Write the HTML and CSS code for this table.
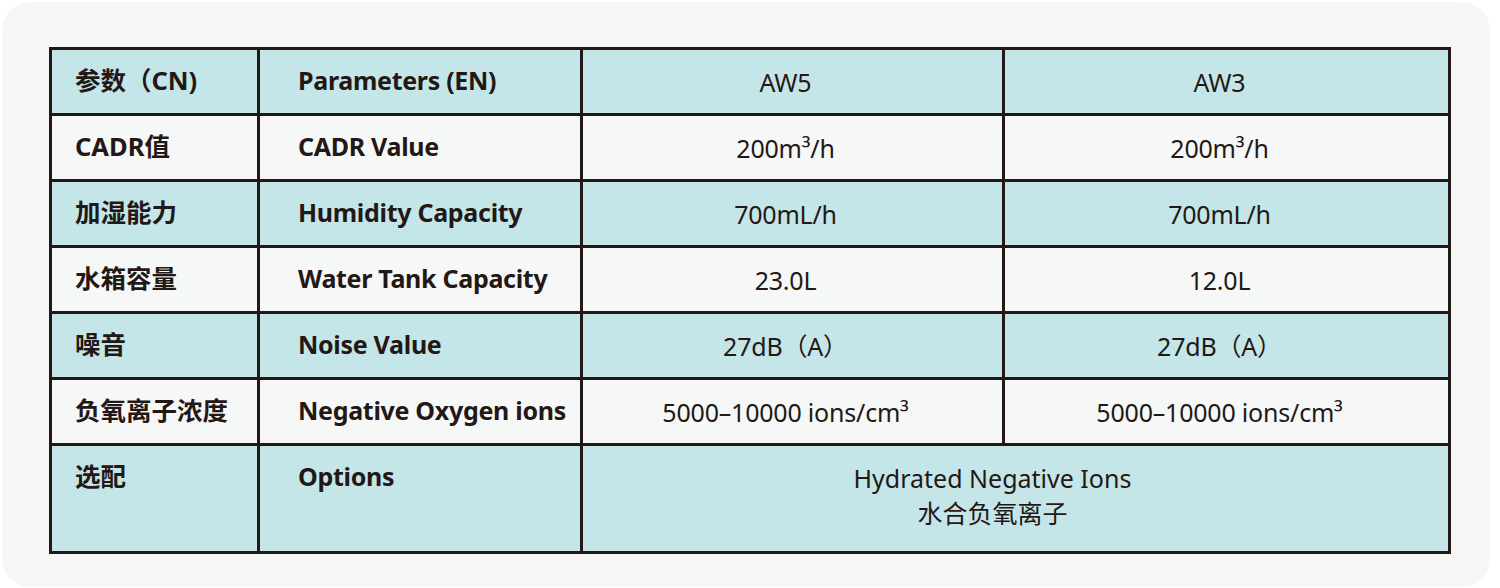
FILE: index.html
```html
<!DOCTYPE html>
<html>
<head>
    <title>AW5 / AW3 Specifications</title>
    <link rel="stylesheet" href="styles.css">
</head>
<body>
    <div class="card">
        <table class="spec">
            <colgroup>
                <col class="col-cn">
                <col class="col-en">
                <col class="col-aw5">
                <col class="col-aw3">
            </colgroup>
            <tr class="teal">
                <td class="cn">参数（CN)</td>
                <td class="en">Parameters (EN)</td>
                <td class="val">AW5</td>
                <td class="val">AW3</td>
            </tr>
            <tr class="plain">
                <td class="cn">CADR值</td>
                <td class="en">CADR Value</td>
                <td class="val">200m³/h</td>
                <td class="val">200m³/h</td>
            </tr>
            <tr class="teal">
                <td class="cn">加湿能力</td>
                <td class="en">Humidity Capacity</td>
                <td class="val">700mL/h</td>
                <td class="val">700mL/h</td>
            </tr>
            <tr class="plain">
                <td class="cn">水箱容量</td>
                <td class="en">Water Tank Capacity</td>
                <td class="val">23.0L</td>
                <td class="val">12.0L</td>
            </tr>
            <tr class="teal">
                <td class="cn">噪音</td>
                <td class="en">Noise Value</td>
                <td class="val">27dB（A）</td>
                <td class="val">27dB（A）</td>
            </tr>
            <tr class="plain">
                <td class="cn">负氧离子浓度</td>
                <td class="en">Negative Oxygen ions</td>
                <td class="val">5000–10000 ions/cm³</td>
                <td class="val">5000–10000 ions/cm³</td>
            </tr>
            <tr class="teal tall">
                <td class="cn">选配</td>
                <td class="en">Options</td>
                <td class="val merged" colspan="2">Hydrated Negative Ions<br>水合负氧离子</td>
            </tr>
        </table>
    </div>
</body>
</html>
```

FILE: styles.css
```css
body {
    margin: 0;
    background-color: #ffffff;
    font-family: "Noto Sans", "Noto Sans CJK SC", sans-serif;
    color: #231815;
}
.card {
    margin: 2px;
    width: 1488px;
    height: 585px;
    box-sizing: border-box;
    padding: 45px 0 0 47px;
    background-color: #f5f6f6;
    border-radius: 28px;
}
.spec {
    table-layout: fixed;
    width: 1402px;
    border-collapse: separate;
    border-spacing: 3px;
    background-color: #231815;
}
.col-cn {
    width: 205px;
}
.col-en {
    width: 320px;
}
.col-aw5 {
    width: 419px;
}
.col-aw3 {
    width: 443px;
}
.spec td {
    box-sizing: border-box;
    height: 63px;
    padding: 0;
    vertical-align: top;
    font-size: 25px;
    line-height: 35px;
    white-space: nowrap;
}
.spec .tall td {
    height: 105px;
}
.teal td {
    background-color: #c4e6e9;
}
.plain td {
    background-color: #f6f7f7;
}
.cn {
    padding: 13px 0 0 23px !important;
    font-weight: 700;
    font-size: 25.5px !important;
}
.en {
    padding: 13px 0 0 38px !important;
    font-weight: 700;
    letter-spacing: -0.3px;
}
.val {
    padding: 15px 14px 0 0 !important;
    text-align: center;
    letter-spacing: -0.2px;
}
.merged {
    padding: 15px 46px 0 0 !important;
    letter-spacing: 0;
}
```
